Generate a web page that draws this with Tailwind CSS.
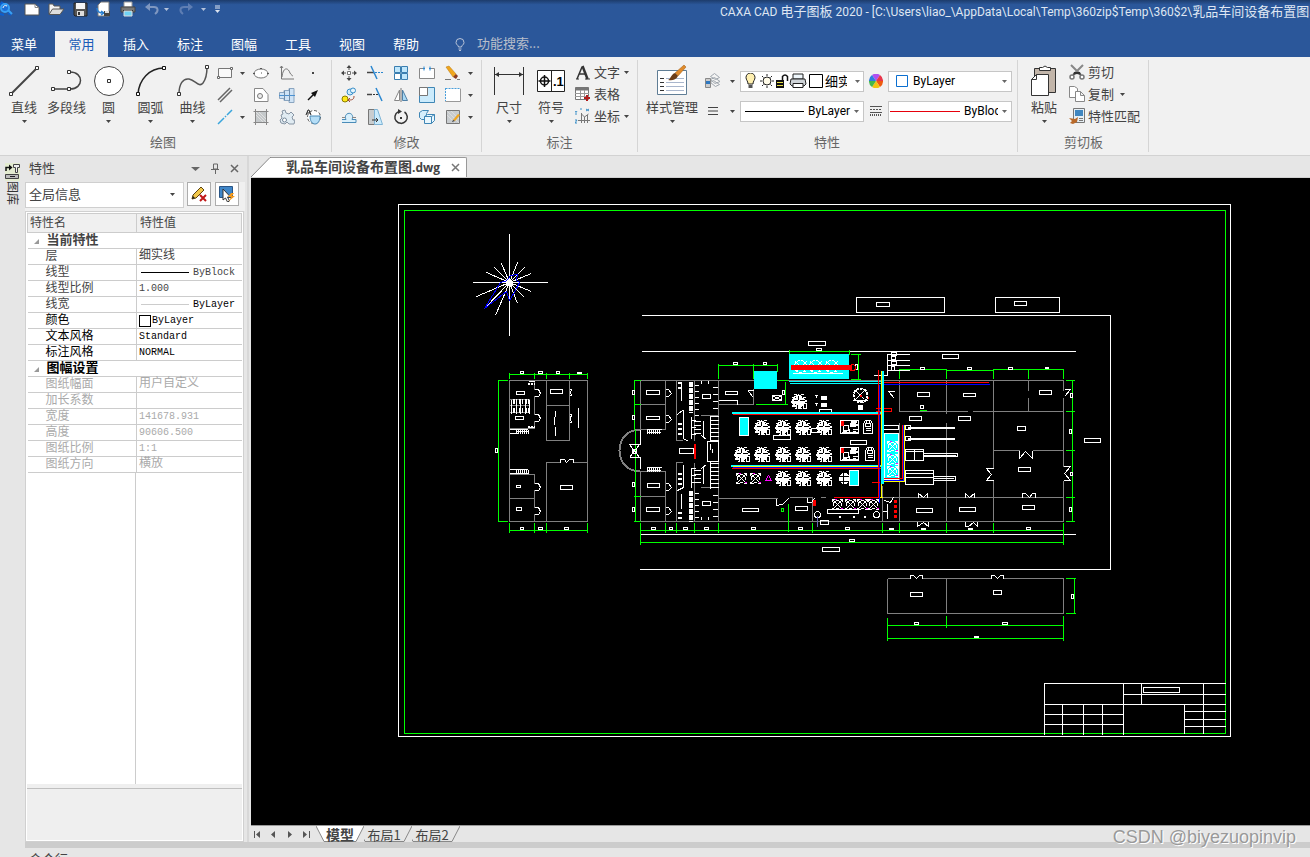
<!DOCTYPE html>
<html lang="zh-CN">
<head>
    <meta charset="UTF-8">
    <meta name="viewport" content="width=device-width, initial-scale=1.0">
    <title>CAXA CAD 电子图板 2020</title>
    <script src="https://cdn.jsdelivr.net/npm/@tailwindcss/browser@4"></script>
</head>
<body class="h-screen flex flex-col overflow-hidden bg-[#e6e6e6] text-[#444444] text-[13px] leading-4 font-['Noto_Sans_CJK_SC',sans-serif]">

<!-- Shared symbols -->
<svg class="hidden">
    <symbol id="caret" viewBox="0 0 5 3"><path d="M0 0h5L2.5 3z" fill="currentColor"/></symbol>
</svg>

<!-- Title bar and tabs -->
<header class="shrink-0 bg-[#2b579a] text-white">
    <div class="h-[31px] flex items-start justify-between overflow-hidden bg-linear-to-b from-[#1d3c6c] to-[#2b579a] to-15%">
        <div class="flex items-center h-[18px] shrink-0">
            <svg class="w-[13px] h-4 mr-[11px]" viewBox="0 0 13 16">
                <path d="M0 3h4M1 1l3 2M0 13l4 1M8 12l3 2" stroke="#0b5fd0" stroke-width="2"/>
                <circle cx="5" cy="7" r="4" fill="#1d6fd8" stroke="#38a0f5" stroke-width="2"/>
                <path d="M8 9l4 4" stroke="#38a0f5" stroke-width="2"/>
                <path d="M3 7c0-2 2-3 4-2" stroke="#fff" fill="none"/>
            </svg>
            <button class="w-6" aria-label="新建"><svg class="w-4 h-4" viewBox="0 0 16 16"><path d="M1 3h10l4 3.500V14H1z" fill="#fff" stroke="#555"/><path d="M11 3v3.500h4" fill="none" stroke="#888"/></svg></button>
            <button class="w-6" aria-label="打开"><svg class="w-4 h-4" viewBox="0 0 16 16"><path d="M1 13V3h4l1 2h6v3" fill="#f3f3f3" stroke="#555"/><path d="M1 13.500L4.500 8H16l-4 5.500z" fill="#ddd" stroke="#555"/></svg></button>
            <button class="w-6" aria-label="保存"><svg class="w-4 h-4" viewBox="0 0 16 16"><path d="M2 2h13v13H3l-1-1z" fill="#555" stroke="#222"/><path d="M4 2h9v6H4z" fill="#f5f5f5"/><path d="M5 10h7v5H5z" fill="#ddd"/><path d="M6 11h2v3H6z" fill="#333"/></svg></button>
            <button class="w-6" aria-label="另存为"><svg class="w-4 h-4" viewBox="0 0 16 16"><path d="M5 1h8v14H2V4z" fill="#fff" stroke="#777"/><path d="M1 7c0 4 2 5 6 5M5 10l3 2-3 2" fill="none" stroke="#2a7fd0" stroke-width="1.500"/><path d="M8 10h6v5H8z" fill="#444"/><path d="M9 10h4v2H9z" fill="#ddd"/></svg></button>
            <button class="w-6" aria-label="打印"><svg class="w-4 h-4" viewBox="0 0 16 16"><path d="M4 1h8v5H4z" fill="#fff" stroke="#999"/><path d="M1 6h14v5H1z" fill="#777" stroke="#444"/><path d="M3 9h10v2H3z" fill="#333"/><path d="M4 10h8v5H4z" fill="#6fd3f5" stroke="#ddd"/></svg></button>
            <button class="w-5 text-[#7f97c0]" aria-label="撤销"><svg class="w-4 h-4" viewBox="0 0 16 16"><path d="M3 6h7c4 0 5 4 1 7" fill="none" stroke="currentColor" stroke-width="2"/><path d="M1 6l5-4v8z" fill="currentColor"/></svg></button>
            <svg class="w-[5px] h-[3px] text-[#b5c3dc]"><use href="#caret"/></svg>
            <button class="w-5 ml-2 text-[#5f7eb3]" aria-label="重做"><svg class="w-4 h-4 ml-px" viewBox="0 0 16 16"><path d="M13 6H6c-4 0-5 4-1 7" fill="none" stroke="currentColor" stroke-width="2"/><path d="M15 6l-5-4v8z" fill="currentColor"/></svg></button>
            <svg class="w-[5px] h-[3px] ml-1 text-[#b5c3dc]"><use href="#caret"/></svg>
            <svg class="w-[7px] h-2 ml-2" viewBox="0 0 7 8"><path d="M1 1h5M1 3h5" stroke="#dde4f0"/><path d="M1 5h5L3.500 8z" fill="#dde4f0"/></svg>
        </div>
        <h1 class="w-[590px] shrink-0 pt-1 whitespace-nowrap text-[12px] text-[#dfe6f2] font-['Roboto','Noto_Sans_CJK_SC',sans-serif]">CAXA CAD <span class="text-[13px]">电子图板</span> 2020 - [C:\Users\liao_\AppData\Local\Temp\360zip$Temp\360$2\<span class="text-[13px]">乳品车间设备布置图</span>.dwg]</h1>
    </div>
    <nav class="h-[26px] flex items-stretch">
        <button class="w-12 mr-[7px]">菜单</button>
        <button class="w-[53px] mr-px bg-[#f1f1f1] text-[#1a5cb8]">常用</button>
        <button class="w-[54px]">插入</button>
        <button class="w-[54px]">标注</button>
        <button class="w-[54px]">图幅</button>
        <button class="w-[54px]">工具</button>
        <button class="w-[54px]">视图</button>
        <button class="w-[54px]">帮助</button>
        <label for="search" class="flex items-center ml-[22px] mr-3">
            <svg class="w-[10px] h-[13px]" viewBox="0 0 10 13"><path d="M3.500 9C3.500 7 1 7 1 4.500a4 4 0 0 1 8 0C9 7 6.500 7 6.500 9zM3.500 11h3M4 12.500h2" fill="none" stroke="#b9c4d8"/></svg>
        </label>
        <input id="search" type="text" placeholder="功能搜索..." class="w-32 pb-[2px] placeholder:text-[#b9bfca] outline-none">
    </nav>
</header>

<!-- Ribbon -->
<section class="shrink-0 h-[99px] flex py-[3px] bg-[#f1f1f1] border-b border-[#d2d2d2]">
    <!-- Draw -->
    <div class="w-[332px] pl-[3px] border-r border-[#d5d5d5] flex flex-col justify-between">
        <div class="flex">
            <button class="w-[42px] flex flex-col items-center">
                <svg class="w-8 h-9" viewBox="0 0 32 36"><path d="M3 34L29 8" stroke="#444" stroke-width="2"/><path d="M1.500 32.500h3v3h-3zM27.500 6.500h3v3h-3z" fill="#fff" stroke="#333"/></svg>
                <span class="mt-[3px]">直线</span><svg class="w-[5px] h-[3px] mt-[5px]"><use href="#caret"/></svg>
            </button>
            <button class="w-[43px] flex flex-col items-center">
                <svg class="w-8 h-9" viewBox="0 0 32 36"><path d="M3 29h16M19 12c14 0 14 17 0 17" fill="none" stroke="#444" stroke-width="1.500"/><path d="M.5 27.500h3v3h-3zM16.500 27.500h3v3h-3zM16.500 10.500h3v3h-3z" fill="#fff" stroke="#333"/></svg>
                <span class="mt-[3px] whitespace-nowrap">多段线</span>
            </button>
            <button class="w-[41px] flex flex-col items-center">
                <svg class="w-8 h-9" viewBox="0 0 32 36"><circle cx="16" cy="21" r="14.500" fill="#fff" stroke="#444"/><path d="M14.500 19.500h3v3h-3z" fill="#fff" stroke="#333"/></svg>
                <span class="mt-[3px]">圆</span><svg class="w-[5px] h-[3px] mt-[5px]"><use href="#caret"/></svg>
            </button>
            <button class="w-[43px] flex flex-col items-center">
                <svg class="w-8 h-9" viewBox="0 0 32 36"><path d="M3 34C4 20 14 8 29 8" fill="none" stroke="#222" stroke-width="1.500"/><path d="M1.500 32.500h3v3h-3zM27.500 6.500h3v3h-3z" fill="#fff" stroke="#111"/></svg>
                <span class="mt-[3px]">圆弧</span><svg class="w-[5px] h-[3px] mt-[5px]"><use href="#caret"/></svg>
            </button>
            <button class="w-[41px] flex flex-col items-center">
                <svg class="w-8 h-9" viewBox="0 0 32 36"><path d="M2 34C2 24 6 18 12 19s10 9 14 4c3-4 4-9 4-16" fill="none" stroke="#555" stroke-width="1.500"/><path d="M.5 32.500h3v3h-3zM28.500 5.500h3v3h-3z" fill="#fff" stroke="#333"/></svg>
                <span class="mt-[3px]">曲线</span><svg class="w-[5px] h-[3px] mt-[5px]"><use href="#caret"/></svg>
            </button>
            <div class="grid grid-cols-[18px_16px_26px_26px_26px] auto-rows-[22px] items-center justify-items-center mt-[2px] ml-[3px]">
                <button aria-label="矩形"><svg class="w-4 h-4" viewBox="0 0 16 16"><path d="M1.500 3.500h13v9h-13z" fill="#fafafa" stroke="#777"/><path d="M.5 11.500h2v2h-2zM13.500 2.500h2v2h-2z" fill="#fff" stroke="#666"/></svg></button>
                <svg class="w-[5px] h-[3px]"><use href="#caret"/></svg>
                <button class="mr-1" aria-label="椭圆"><svg class="w-4 h-4" viewBox="0 0 16 16"><ellipse cx="8" cy="8.500" rx="7" ry="4.500" fill="#fff" stroke="#777"/><path d="M8 8h1M7 3.500h2M0 8.500h2M14 8.500h2" stroke="#555"/></svg></button>
                <button class="mr-1" aria-label="函数曲线"><svg class="w-4 h-4" viewBox="0 0 16 16"><path d="M2.500 1v13H15M3 12C4 2 9 2 11 8c1 2 3 3 3 3M1 3l1.500-2L4 3" fill="none" stroke="#777"/></svg></button>
                <button class="mr-1" aria-label="点"><svg class="w-4 h-4" viewBox="0 0 16 16"><path d="M7 7h2v2H7z" fill="#444"/></svg></button>

                <button aria-label="平行线"><svg class="w-4 h-4" viewBox="0 0 16 16"><path d="M1 13L13 1M3 15L15 3" stroke="#666" stroke-width="1.500"/></svg></button>
                <span></span>
                <button class="mr-1" aria-label="局部放大"><svg class="w-4 h-4" viewBox="0 0 16 16"><path d="M1.500 1.500H10l5 6v7H1.500z" fill="#fff" stroke="#888"/><circle cx="7" cy="9" r="2.500" fill="#eee" stroke="#777"/></svg></button>
                <button class="mr-1" aria-label="孔轴"><svg class="w-4 h-4" viewBox="0 0 16 16"><path d="M.5 5.500H5v-2h5v-2h5v14h-5v-2H5v-2H.500z" fill="#cfe3f5" stroke="#8aa5c0"/><path d="M0 8.500h16" stroke="#4a90d0"/><path d="M5.500 4v9M10.500 2v12" stroke="#6d8cab"/></svg></button>
                <button class="mr-1" aria-label="箭头"><svg class="w-4 h-4" viewBox="0 0 16 16"><path d="M3 13l6-6" stroke="#111" stroke-width="1.500"/><path d="M13 3L6 6l4 4z" fill="#111"/></svg></button>

                <button aria-label="中心线"><svg class="w-4 h-4" viewBox="0 0 16 16"><path d="M1 15L7 9M8 8l1-1M10 6l5-5" stroke="#3aa5dc" stroke-width="1.500"/></svg></button>
                <svg class="w-[5px] h-[3px]"><use href="#caret"/></svg>
                <button class="mr-1" aria-label="剖面线"><svg class="w-4 h-4" viewBox="0 0 16 16"><path d="M2.500 2.500h11v11h-11z" fill="#c4c8ca" stroke="#777"/><path d="M.5 2.500h15M.5 13.500h15M2.500 0v16M13.500 0v16" stroke="#888"/><path d="M3 6l7 7M3 3l10 10M6 3l7 7" stroke="#e0e0e0"/></svg></button>
                <button class="mr-1" aria-label="齿轮"><svg class="w-4 h-4" viewBox="0 0 16 16"><path d="M3 2l3-1 1 3 3 1 2-2 3 3-2 2 1 3h2l-1 4h-5l-2-2-2 2-4-1-1-3 2-2-1-3 2-1z" fill="#e0ebf2" stroke="#8896a5"/><circle cx="5.500" cy="11" r="2" fill="#fff" stroke="#75889a"/></svg></button>
                <button class="mr-1" aria-label="局部填充"><svg class="w-4 h-4" viewBox="0 0 16 16"><circle cx="9" cy="8" r="6.500" fill="#fff" stroke="#555" stroke-dasharray="3 2"/><path d="M5 7h10c0 5-2 8-5 8S5 12 5 7z" fill="#b5def7" stroke="#4a89b5"/><path d="M1 6l2-5h1l2 5M2 4h3" fill="none" stroke="#222"/></svg></button>
            </div>
        </div>
        <p class="text-center text-[#666666] leading-5 pr-2">绘图</p>
    </div>

    <!-- Modify -->
    <div class="w-[150px] pl-1 border-r border-[#d5d5d5] flex flex-col justify-between">
        <div class="grid grid-cols-[26px_26px_26px_26px_26px_9px] auto-rows-[22px] items-center justify-items-center mt-[2px]">
            <button aria-label="平移"><svg class="w-4 h-4" viewBox="0 0 16 16"><path d="M6.500 6.500h3v3h-3z" fill="#fff" stroke="#777"/><path d="M8 0l2.500 3h-5zM8 16l2.500-3h-5zM0 8l3-2.500v5zM16 8l-3-2.500v5z" fill="#444"/><path d="M8 3v2M8 11v2M3 8h2M11 8h2" stroke="#555"/></svg></button>
            <button aria-label="裁剪"><svg class="w-4 h-4" viewBox="0 0 16 16"><path d="M0 7.500h7" stroke="#444" stroke-width="1.500"/><path d="M8 7.500h8" stroke="#2b87d0" stroke-dasharray="2 1"/><path d="M4 1l6 13" stroke="#2b87d0" stroke-width="1.500"/></svg></button>
            <button aria-label="阵列"><svg class="w-4 h-4" viewBox="0 0 16 16"><path d="M1.500 1.500h6v6h-6zM8.500 1.500h6v6h-6zM8.500 8.500h6v6h-6z" fill="#bfe6fb" stroke="#3a7eb0"/><path d="M1.500 8.500h6v6h-6z" fill="#fff" stroke="#3a7eb0"/></svg></button>
            <button aria-label="打断"><svg class="w-4 h-4" viewBox="0 0 16 16"><path d="M4 3.500H.500v10h15v-10H12" fill="#fff" stroke="#888"/><path d="M5 1.500v4M11 1.500v4M4 3.500h2M10 3.500h2" stroke="#2b87d0"/></svg></button>
            <button aria-label="删除"><svg class="w-4 h-4" viewBox="0 0 16 16"><path d="M1 2l3-1 7 8-3 3z" fill="#f0a61e" stroke="#b9760b" stroke-width=".5"/><path d="M8 12l3-3 2 2-2 3z" fill="#8c3c20"/><path d="M0 14.500h6M12 14.500h3" stroke="#777"/></svg></button>
            <svg class="w-[5px] h-[3px]"><use href="#caret"/></svg>

            <button aria-label="平移复制"><svg class="w-4 h-4" viewBox="0 0 16 16"><circle cx="4" cy="12" r="3" fill="#ffe81a" stroke="#8a7d00"/><circle cx="9" cy="5" r="3" fill="#cdeafc" stroke="#3a8fc8"/><circle cx="12" cy="3.500" r="2.500" fill="#e6f5fd" stroke="#3a8fc8"/><path d="M8 13c4 0 5-1 5-4M9 11l-2 2 2 2" fill="none" stroke="#a04a35"/></svg></button>
            <button aria-label="延伸"><svg class="w-4 h-4" viewBox="0 0 16 16"><path d="M0 7.500h5" stroke="#444" stroke-width="1.500"/><path d="M6 7.500h5" stroke="#333" stroke-dasharray="2 1"/><path d="M9 1l6 13" stroke="#2b87d0" stroke-width="1.500"/></svg></button>
            <button aria-label="镜像"><svg class="w-4 h-4" viewBox="0 0 16 16"><path d="M6.500 3v10.500h-5z" fill="#fff" stroke="#888"/><path d="M9.500 3v10.500h5z" fill="#a8d8f4" stroke="#4f7fa5"/><path d="M8 1v14" stroke="#777"/></svg></button>
            <button aria-label="缩放"><svg class="w-4 h-4" viewBox="0 0 16 16"><path d="M.5.500h15v15H.500z" fill="#cbebfc" stroke="#3f86b5"/><path d="M.5.500h8v8h-8z" fill="#fff" stroke="#777"/></svg></button>
            <button aria-label="分解"><svg class="w-4 h-4" viewBox="0 0 16 16"><path d="M.5 1.500h15v13H.500z" fill="#fff" stroke="#999"/><path d="M.5 1.500h15M.5 1v13" stroke="#f1f1f1"/><path d="M.5 1.500h15M.5 1v13" stroke="#4aa0dc" stroke-dasharray="2 1"/></svg></button>
            <svg class="w-[5px] h-[3px]"><use href="#caret"/></svg>

            <button aria-label="等距线"><svg class="w-4 h-4" viewBox="0 0 16 16"><path d="M1 13.500h14v-3h-4c2-4-1-7-4-6s-3 4-2 6H1" fill="#d8effb" stroke="#4a8cb8"/><path d="M1 8.500h3M11 8.500h4" stroke="#888"/></svg></button>
            <button aria-label="拉伸"><svg class="w-4 h-4" viewBox="0 0 16 16"><path d="M1.500.500h6v15h-6z" fill="#c9cdcf" stroke="#777"/><path d="M7.500.500h3l5 15h-8z" fill="#cbebfc" stroke="#7fb4d6"/><path d="M5 11h6M9 9l2 2-2 2" fill="none" stroke="#333"/></svg></button>
            <button aria-label="旋转"><svg class="w-4 h-4" viewBox="0 0 16 16"><path d="M11.500 3A6.200 6.200 0 1 1 5 2.800" fill="none" stroke="#333" stroke-width="1.500"/><path d="M5 0l4 2.500L5 5z" fill="#333"/><path d="M7 8h2v2H7z" fill="#333"/></svg></button>
            <button aria-label="块"><svg class="w-4 h-4" viewBox="0 0 16 16"><path d="M.5 3.500l3-2h6l-2 3v6h-5l-2-2z" fill="#d5eefb" stroke="#3f86b5"/><path d="M5.500 7.500l3-2h7v6l-3 3h-7zM5.500 7.500h7v7M12.500 7.500l3-2" fill="#e9f7fe" stroke="#3f86b5"/></svg></button>
            <button aria-label="编辑填充"><svg class="w-4 h-4" viewBox="0 0 16 16"><path d="M1.500 1.500h13v13h-13z" fill="#c8cccf" stroke="#777"/><path d="M2 6l8 8M2 2l12 12M6 2l8 8" stroke="#ddd"/><path d="M8 11l5-6 2 1-5 6z" fill="#f0a61e"/><path d="M8 11l2 1-3 1z" fill="#333"/></svg></button>
            <svg class="w-[5px] h-[3px]"><use href="#caret"/></svg>
        </div>
        <p class="text-center text-[#666666] leading-5 pr-1">修改</p>
    </div>

    <!-- Annotation -->
    <div class="w-[156px] pl-[6px] border-r border-[#d5d5d5] flex flex-col justify-between">
        <div class="flex">
            <button class="w-[42px] flex flex-col items-center">
                <svg class="w-8 h-9" viewBox="0 0 32 36"><path d="M1.500 7v28M30.500 7v28M2 14.500h28" stroke="#333"/><path d="M2 14.500l4-2.500v5zM30 14.500L26 12v5z" fill="#333"/></svg>
                <span class="mt-[3px]">尺寸</span><svg class="w-[5px] h-[3px] mt-[5px]"><use href="#caret"/></svg>
            </button>
            <button class="w-[42px] flex flex-col items-center">
                <svg class="w-8 h-9" viewBox="0 0 32 36"><path d="M2.500 10.500h27v21h-27zM16.500 10v22" fill="#fff" stroke="#222"/><circle cx="9.500" cy="21" r="4" fill="none" stroke="#111" stroke-width="1.500"/><path d="M3.500 21h12M9.500 15v12" stroke="#111" stroke-width="1.500"/><text x="18" y="26" font-size="13" font-weight="bold" fill="#000" font-family="Liberation Sans">.1</text></svg>
                <span class="mt-[3px]">符号</span><svg class="w-[5px] h-[3px] mt-[5px]"><use href="#caret"/></svg>
            </button>
            <div class="grid auto-rows-[22px] mt-[1px] ml-[3px]">
                <button class="flex items-center gap-1"><svg class="w-[15px] h-4" viewBox="0 0 15 16"><path d="M2 15L7 3M4 10h7" fill="none" stroke="#333" stroke-width="1.500"/><path d="M7.500 2L12.500 15" stroke="#333" stroke-width="2.500"/><path d="M1 15h3M10 15h5" stroke="#333"/></svg>文字<svg class="w-[5px] h-[3px]"><use href="#caret"/></svg></button>
                <button class="flex items-center gap-1"><svg class="w-[15px] h-4" viewBox="0 0 15 16"><path d="M.5 1.500h13v12H.500z" fill="#fff" stroke="#777"/><path d="M.5 1.500h13v3H.500z" fill="#777"/><path d="M0 7.500h14M0 10.500h14M5.500 4v9M9.500 4v9" stroke="#999"/><path d="M12 9v6M9 12h6" stroke="#b01c1c" stroke-width="2"/></svg>表格</button>
                <button class="flex items-center gap-1"><svg class="w-[15px] h-4" viewBox="0 0 15 16"><path d="M6.500 5v10M3 12.500h12M6.500 6l3 3 4-3M9.500 9v6M12.500 7v8" fill="none" stroke="#777"/><path d="M0 3l1 1.500L2 3M1 5v2M0 12h2l-2 3h2M5 1h2M11 1l3 2M14 1l-3 2" fill="none" stroke="#3a8fc8"/></svg>坐标<svg class="w-[5px] h-[3px]"><use href="#caret"/></svg></button>
            </div>
        </div>
        <p class="text-center text-[#666666] leading-5 pr-[6px]">标注</p>
    </div>

    <!-- Properties -->
    <div class="w-[380px] pl-[5px] border-r border-[#d5d5d5] flex flex-col justify-between">
        <div class="flex">
            <button class="w-[58px] flex flex-col items-center">
                <svg class="w-8 h-9" viewBox="0 0 32 36"><path d="M1.500 10.500h29v24h-29z" fill="#fff" stroke="#5f7d95"/><path d="M4 18.500h4M4 22.500h4M4 26.500h4M4 30.500h4" stroke="#333"/><path d="M10 18.500h18M10 22.500h18M10 26.500h18M10 30.500h18" stroke="#a9b6cc"/><path d="M19 13L28 5l2 2-8 9z" fill="#e08a2a" stroke="#9a5a12" stroke-width=".5"/><path d="M12 20c3-1 3-6 7-7l3 3c-2 4-6 5-10 4z" fill="#6b3d17"/></svg>
                <span class="mt-[3px] whitespace-nowrap">样式管理</span><svg class="w-[5px] h-[3px] mt-[5px]"><use href="#caret"/></svg>
            </button>
            <div class="grid grid-cols-[24px_15px_124px_24px_124px] auto-rows-[30px] items-center mt-[6px]">
                <button class="justify-self-center" aria-label="图层"><svg class="w-4 h-4" viewBox="0 0 16 16"><path d="M5.500 3.500l4-3 5 4-4 2zM5.500 6.500l4-2 5.500 4-5 2zM5.500 9.500l3-2 6 4-4 2z" fill="#f4f4f4" stroke="#a0a7ae"/><path d="M.5 5.500h5v9h-5z" fill="#ccc" stroke="#888"/><path d="M1 8h4v3H1z" fill="#2f78c0"/></svg></button>
                <svg class="w-[5px] h-[3px] justify-self-center"><use href="#caret"/></svg>
                <div class="h-[21px] flex items-center gap-px px-[3px] bg-white border border-[#c6c6c6] text-black">
                    <svg class="w-[80px] h-4 shrink-0" viewBox="0 0 80 16">
                        <path d="M4 11C4 8 2 7 2 4.500a4.500 4.500 0 0 1 9 0C11 7 9 8 9 11z" fill="#fff0b0" stroke="#222"/><path d="M4.500 12h4v3h-4z" fill="#555"/>
                        <circle cx="23" cy="8" r="4" fill="#fffbe8" stroke="#222"/><path d="M23 1v2M23 13v2M16 8h2M28 8h2M18 3l1.500 1.500M26.500 11.500L28 13M28 3l-1.500 1.500M18 13l1.500-1.500" stroke="#222"/>
                        <path d="M32 7h8v8h-8z" fill="#111"/><path d="M33 9.500h6M33 12.500h6" stroke="#e8e04a"/><path d="M38.500 7V3.500q2.500-3 5 0V8" fill="none" stroke="#111" stroke-width="1.500"/>
                        <path d="M49 1h10v5H49z" fill="#eef6fb" stroke="#222"/><path d="M47 6h14l1 5-2 2H48l-2-2z" fill="#cfd4d8" stroke="#222"/><path d="M49 10.500h10v4H49z" fill="#fff" stroke="#222"/>
                        <path d="M65.500 1.500h13v13h-13z" fill="#fff" stroke="#000"/>
                    </svg>
                    <label class="sr-only" for="layer">图层</label>
                    <select id="layer" class="appearance-none w-[22px] overflow-hidden text-clip whitespace-nowrap"><option>细实线</option></select>
                    <svg class="w-[5px] h-[3px] ml-auto shrink-0 text-[#666666]"><use href="#caret"/></svg>
                </div>
                <svg class="w-[14px] h-[14px] justify-self-center" viewBox="0 0 14 14"><path d="M7 7L3 1a7 7 0 0 1 8 0z" fill="#b04ff0"/><path d="M7 7l4-6a7 7 0 0 1 3 6z" fill="#e8354a"/><path d="M7 7h7a7 7 0 0 1-3 6z" fill="#ee5a10"/><path d="M7 7l4 6a7 7 0 0 1-8 0z" fill="#f2c40f"/><path d="M7 7l-4 6a7 7 0 0 1-3-6z" fill="#45b84a"/><path d="M7 7H0a7 7 0 0 1 3-6z" fill="#2f7de0"/></svg>
                <div class="h-[21px] flex items-center px-[6px] bg-white border border-[#c6c6c6] text-black">
                    <svg class="w-[14px] h-[14px] shrink-0 mr-1" viewBox="0 0 14 14"><path d="M1.500 1.500h11v11h-11z" fill="#fff" stroke="#0b6fd0"/></svg>
                    <label class="sr-only" for="color">颜色</label>
                    <select id="color" class="appearance-none flex-1 text-[12px] font-['Roboto',sans-serif]"><option>ByLayer</option></select>
                    <svg class="w-[5px] h-[3px] ml-auto mr-[-2px] text-[#666666]"><use href="#caret"/></svg>
                </div>

                <button class="justify-self-center" aria-label="线宽"><svg class="w-[10px] h-[10px]" viewBox="0 0 10 10"><path d="M0 1.500h10M0 5h10M0 8.500h10" stroke="#444"/></svg></button>
                <svg class="w-[5px] h-[3px] justify-self-center"><use href="#caret"/></svg>
                <div class="h-[21px] flex items-center px-1 bg-white border border-[#c6c6c6] text-black">
                    <span class="w-[59px] border-t border-black mr-1"></span>
                    <label class="sr-only" for="linetype">线型</label>
                    <select id="linetype" class="appearance-none w-[46px] text-[12px] font-['Roboto',sans-serif]"><option>ByLayer</option></select>
                    <svg class="w-[5px] h-[3px] ml-auto text-[#666666]"><use href="#caret"/></svg>
                </div>
                <svg class="w-3 h-3 justify-self-center" viewBox="0 0 12 12"><path d="M0 1.500h12M0 7.500h12" stroke="#555"/><path d="M0 4.500h12" stroke="#555" stroke-dasharray="2 1"/><path d="M0 10h12" stroke="#555" stroke-width="2" stroke-dasharray="1 1"/></svg>
                <div class="h-[21px] flex items-center pl-px pr-1 bg-white border border-[#c6c6c6] text-black">
                    <span class="w-[70px] border-t border-red-600 mr-1 shrink-0"></span>
                    <label class="sr-only" for="lineweight">线宽</label>
                    <select id="lineweight" class="appearance-none w-[34px] overflow-hidden text-clip whitespace-nowrap text-[12px] font-['Roboto',sans-serif]"><option>ByBlock</option></select>
                    <svg class="w-[5px] h-[3px] ml-auto shrink-0 text-[#666666]"><use href="#caret"/></svg>
                </div>
            </div>
        </div>
        <p class="text-center text-[#666666] leading-5 pr-[6px]">特性</p>
    </div>

    <!-- Clipboard -->
    <div class="w-[131px] pl-[5px] border-r border-[#d5d5d5] flex flex-col justify-between">
        <div class="flex">
            <button class="w-[42px] flex flex-col items-center">
                <svg class="w-8 h-9" viewBox="0 0 32 36"><path d="M6.500 8.500h21v24h-21z" fill="#c2b5a9" stroke="#333"/><path d="M11.500 10.500v-3h3q2.500-3 5 0h3v3z" fill="#fff" stroke="#333"/><path d="M3.500 19.500l5-5h12v21h-17zM8.500 14.500v5h-5" fill="#fff" stroke="#333"/></svg>
                <span class="mt-[3px]">粘贴</span><svg class="w-[5px] h-[3px] mt-[5px]"><use href="#caret"/></svg>
            </button>
            <div class="grid auto-rows-[22px] mt-[1px] ml-1">
                <button class="flex items-center gap-[3px]"><svg class="w-4 h-4" viewBox="0 0 16 16"><path d="M2 1l10 10M14 1L4 11" stroke="#888" stroke-width="2"/><path d="M5 8h6l1 3-4-1-4 1z" fill="#333"/><circle cx="3" cy="13" r="2" fill="#fff" stroke="#777" stroke-width="1.500"/><circle cx="13" cy="13" r="2" fill="#fff" stroke="#777" stroke-width="1.500"/></svg>剪切</button>
                <button class="flex items-center gap-[3px]"><svg class="w-4 h-4" viewBox="0 0 16 16"><path d="M.5.500h5l3 2v9h-8z" fill="#fff" stroke="#888"/><path d="M6.500 5.500h5l4 4v6h-9zM11.500 5.500v4h4" fill="#fff" stroke="#888"/></svg>复制<svg class="w-[5px] h-[3px] ml-[3px]"><use href="#caret"/></svg></button>
                <button class="flex items-center gap-[3px] whitespace-nowrap"><svg class="w-4 h-4" viewBox="0 0 16 16"><path d="M4.500.500h11v14h-11z" fill="#e6eff5" stroke="#777"/><path d="M6 2h8v6H6z" fill="#3f86c0"/><path d="M10 10.500h4M10 12.500h4" stroke="#777"/><path d="M0 10l6 1 3-2-1 5-4 2-3-1 2-2z" fill="#b8692a"/></svg>特性匹配</button>
            </div>
        </div>
        <p class="text-center text-[#666666] leading-5 pr-1">剪切板</p>
    </div>
</section>

<!-- Work area -->
<main class="flex-1 min-h-0 flex">
    <!-- Docked library tab -->
    <button class="w-[25px] shrink-0 flex flex-col items-center pt-[7px]">
        <svg class="w-[15px] h-[18px]" viewBox="0 0 15 18"><path d="M0 0h15v18H0z" fill="#e4ecd0"/><path d="M1 8V4.500H5" fill="none" stroke="#111" stroke-width="1.500"/><path d="M4 1.500L7.500 4.500 4 7.500z" fill="#111"/><path d="M8.500 1.500h6v3h-2v5h-2v-5h-2z" fill="#eee" stroke="#444"/><path d="M.5 11.500h13v4H.500z" fill="#bbb" stroke="#444"/><path d="M5 13.500h5" stroke="#222"/></svg>
        <span class="text-[12px] leading-[14px] text-[#333333] [writing-mode:vertical-rl] [text-orientation:sideways]">图库</span>
    </button>

    <!-- Properties panel -->
    <aside class="w-[220px] shrink-0 flex flex-col">
        <div class="h-[26px] flex items-center pl-1 pr-[6px] pb-[3px]">
            <h2 class="flex-1">特性</h2>
            <svg class="w-[50px] h-3" viewBox="0 0 50 12"><path d="M2 5h9l-4.500 4z" fill="#666"/><path d="M24.500 2h4v5h-4zM22 7.500h8M26.500 8v4" fill="none" stroke="#666"/><path d="M42 3l7 7M49 3l-7 7" stroke="#666" stroke-width="1.500"/></svg>
        </div>
        <div class="flex items-start gap-[3px] h-[29px] bg-[#f0f0f0]">
            <div class="w-[159px] h-[26px] flex items-center pl-[3px] pr-1 pb-[2px] bg-white border border-[#cfcfcf]">
                <label class="sr-only" for="scope">特性范围</label>
                <select id="scope" class="appearance-none flex-1"><option>全局信息</option></select>
                <svg class="w-[5px] h-[3px] mr-1"><use href="#caret"/></svg>
            </div>
            <button class="w-6 h-6 flex items-center justify-center bg-white border border-[#adadad]" aria-label="清除选择"><svg class="w-4 h-4" viewBox="0 0 16 16"><path d="M1 13l1-4L10 1l3 3-8 8z" fill="#f2c84a" stroke="#5a4310"/><path d="M1 13l1-3 2 2z" fill="#222"/><path d="M9 9l6 6M15 9l-6 6" stroke="#c01818" stroke-width="2"/></svg></button>
            <button class="w-6 h-6 ml-px flex items-center justify-center bg-white border border-[#adadad]" aria-label="快速选择"><svg class="w-4 h-4" viewBox="0 0 16 16"><path d="M.5.500h13v11H.500z" fill="#3f86c8" stroke="#2a5585"/><path d="M4 3v11l2.500-2 2 4 2-1-2-4h3z" fill="#fff" stroke="#333"/><path d="M12 7l-3 4h3l-2 4 6-5h-3l2-3z" fill="#f59a1b"/></svg></button>
        </div>
        <div class="flex-1 min-h-0 flex flex-col mr-px bg-[#efefef] border border-[#d0d0d0] outline outline-white -outline-offset-2">
            <div class="flex-1 min-h-0 flex flex-col bg-white px-px pt-px">
                <table class="w-full table-fixed border-collapse text-[12px] leading-[15px] whitespace-nowrap font-['Liberation_Mono','Noto_Sans_CJK_SC',monospace]">
                    <thead>
                        <tr class="h-[19px] bg-[#f0f0f0] text-left">
                            <th class="w-[109px] p-0 pl-[2px] pt-[2px] font-normal border border-[#cccccc]">特性名</th>
                            <th class="p-0 pl-[3px] pt-[2px] font-normal border border-[#cccccc]">特性值</th>
                        </tr>
                    </thead>
                    <tbody class="[&_tr]:h-4 [&_tr]:border-b [&_tr]:border-[#cccccc] [&_td]:p-0 [&_td]:pl-[2px] [&_th]:p-0 [&_th]:pl-[18px] [&_th]:text-left [&_th]:font-normal [&_td]:border-l [&_td]:border-[#cccccc] [&_td]:leading-[15px] [&_th]:pt-px [&_th]:leading-[14px]">
                        <tr><th colspan="2"><span class="flex items-center gap-[8px] -ml-3 text-[13px] font-bold"><svg class="w-[5px] h-[5px]" viewBox="0 0 5 5"><path d="M5 0v5H0z" fill="#999"/></svg>当前特性</span></th></tr>
                        <tr><th>层</th><td>细实线</td></tr>
                        <tr><th>线型</th><td><span class="flex items-center gap-1 text-[10px]"><span class="w-12 ml-[2px] border-t border-black"></span>ByBlock</span></td></tr>
                        <tr><th>线型比例</th><td><span class="block text-[10px]">1.000</span></td></tr>
                        <tr><th>线宽</th><td><span class="flex items-center gap-1 text-[10px] text-black"><span class="w-12 ml-[2px] border-t border-[#cccccc]"></span>ByLayer</span></td></tr>
                        <tr class="text-black"><th>颜色</th><td><span class="flex items-center gap-px text-[10px]"><span class="w-3 h-3 border border-black"></span>ByLayer</span></td></tr>
                        <tr class="text-black"><th>文本风格</th><td><span class="block text-[10px]">Standard</span></td></tr>
                        <tr class="text-black"><th>标注风格</th><td><span class="block text-[10px]">NORMAL</span></td></tr>
                        <tr class="text-black"><th colspan="2"><span class="flex items-center gap-[8px] -ml-3 text-[13px] font-bold"><svg class="w-[5px] h-[5px]" viewBox="0 0 5 5"><path d="M5 0v5H0z" fill="#999"/></svg>图幅设置</span></th></tr>
                        <tr class="text-[#aaaaaa]"><th>图纸幅面</th><td>用户自定义</td></tr>
                        <tr class="text-[#aaaaaa]"><th>加长系数</th><td></td></tr>
                        <tr class="text-[#aaaaaa]"><th>宽度</th><td><span class="block text-[10px]">141678.931</span></td></tr>
                        <tr class="text-[#aaaaaa]"><th>高度</th><td><span class="block text-[10px]">90606.500</span></td></tr>
                        <tr class="text-[#aaaaaa]"><th>图纸比例</th><td><span class="block text-[10px]">1:1</span></td></tr>
                        <tr class="text-[#aaaaaa]"><th>图纸方向</th><td>横放</td></tr>
                    </tbody>
                </table>
                <div class="flex-1 w-[109px] border-r border-[#cccccc]"></div>
            </div>
            <div class="h-[57px] shrink-0 pt-1"><div class="border-t border-[#c0c0c0]"></div></div>
        </div>
    </aside>
    <div class="w-[2px] mx-[2px] shrink-0 bg-[#d8d8d8]"></div>

    <!-- Drawing view -->
    <section class="flex-1 min-w-0 flex flex-col">
        <div class="h-[22px] shrink-0 flex items-end border-b border-[#d0d0d0]">
            <div class="flex items-end">
                <svg class="w-5 h-5" viewBox="0 0 20 20"><path d="M0 20L19 .500h1V20z" fill="#fff"/><path d="M0 20L19 .500h1" fill="none" stroke="#888"/></svg>
                <div class="h-5 w-[196px] flex items-center justify-between pl-[15px] pr-[6px] bg-white border-t border-r border-[#999999] rounded-tr-[2px]">
                    <span class="text-[14px] font-bold whitespace-nowrap font-['Open_Sans','Noto_Sans_CJK_SC',sans-serif]">乳品车间设备布置图<span class="text-[12px]">.dwg</span></span>
                    <button aria-label="关闭"><svg class="w-[9px] h-[9px]" viewBox="0 0 9 9"><path d="M1 1l7 7M8 1L1 8" stroke="#777" stroke-width="1.500"/></svg></button>
                </div>
            </div>
        </div>

        <div class="flex-1 min-h-0 bg-black">
            <svg class="w-full h-full" viewBox="250.5 177.5 1059 647" fill="none" stroke="#fff" stroke-width="1" shape-rendering="crispEdges">
                <defs>
                    <!-- process tank -->
                    <g id="tank">
                        <circle r="6" fill="#fff"/>
                        <path d="M-8 0h16M-7 4h14M-5 -7h3M2 -7h3M-7 -4h2M5 -4h2M-4 7h7M0 -8v3"/>
                        <path d="M-8 1h3M-7 5h3M5 -1h3"/>
                        <path d="M-5 -1h4M1 -1h5M0 -6v4M-1 3v4" stroke="#000"/>
                        <path d="M-4 -4h1M3 -4h1M-4 3h1" stroke="#000"/>
                        <path d="M5 2h3v5h-3z" fill="#000"/>
                    </g>
                    <!-- round stirrer -->
                    <g id="mixer">
                        <path d="M-5 -5l10 10M5 -5l-10 10M-5 -5h3M2 -5h3M-5 5h3M2 5h3M-5 -5v2M5 -5v2M-5 3v2M5 3v2"/>
                        <circle r="4"/>
                        <path d="M-3 -5h2M3 4h2" stroke="#f0f"/>
                    </g>
                    <g id="filler">
                        <path d="M0 0h18v13h-18zM3 5h5v5h-5zM10 3h5v3h-5zM9 8v5M12 9h5M2 11h4M12 11h3"/>
                        <path d="M10 1h6M10 4h7M1 12h16" stroke-width="2"/>
                        <path d="M1.500 0v5" stroke="#f00" stroke-width="3"/>
                    </g>
                    <g id="can"><path d="M0 3l2-3h5l2 3v10h-9zM2 3h5v3h-5zM2 8h5M2 10h5M3 0v3M6 0v3"/></g>
                </defs>

                <!-- sheet frame -->
                <path d="M398 204h832v532h-832z"/>
                <path d="M404 210h821v523h-821z" stroke="#0f0"/>

                <!-- wind rose -->
                <path d="M509 233v102M472 282h75M486 272l23 10M494 267l15 15M501 263l8 19M517 262l-8 20M524 267l-15 15M531 273l-22 9M531 291l-22-9M524 297l-15-15M517 303l-8-21M495 315l14-33M485 307l24-25M476 296l33-14"/>
                <path d="M484 308l16-26 7-2 3-5 7-1-1 6 3 2-3 6-7 12-3-9z" stroke="#00f"/>
                <circle cx="509" cy="282" r="3" fill="#fff"/>

                <!-- site outline -->
                <path d="M641 315h469v254h-471M641 351h434M639 534h436M856 297h88v15h-88zM876 302h13v4h-13zM995 297h64v15h-64zM1014 301h12v4h-12zM1084 438h16v4h-16zM942 354h16v4h-16zM808 341h17v4h-17zM822 547h17v4h-17z"/>

                <!-- walls -->
                <g stroke="#808080">
                    <path d="M509 380h78v141h-78zM534 380v9M534 395v19M534 420v8h-25M509 405h20M509 399h20M509 412h20M546 380v60h23v-60M546 405h23M546 521v-59h14M573 462h14M509 474h25v9M534 489v18M534 513v8M509 498h25"/>
                    <path d="M640 380h423M640 521h423M640 380v49h25v-49M640 404h25M640 521v-50h25v50M640 496h25M676 380v60h6M676 521v-59h6M694 380v60M694 462v59M718 380v141M700 415h18M700 487h18"/>
                    <path d="M640 429c-28 0-28 42 0 42" stroke-width="2"/>
                    <path d="M718 404h35v-16M718 498h59M789 497h23M825 497h-5M882 497h181M812 497v24M882 485v36M899 380v31h68M972 411h91M946 380v33M946 422v99M993 380v88M993 480v41M1028 380v10M1028 397v14M1063 380v10M1063 397v69M1063 480v41M993 450h26M1032 450h31M899 422v99M887 578h23M922 578h69M1003 578h60v35h-176v-35M946 578v35"/>
                </g>

                <!-- dimension lines -->
                <g stroke="#0f0">
                    <path d="M509 374h78M509 372v6M534 372v6M546 372v6M569 372v6M587 372v6M498 380v141M497 380h10M497 521h10M509 530h78M509 522v10M534 522v10M546 522v10M587 522v10"/>
                    <path d="M634 380v49M635 429v92M633 380h7M633 404h7M633 496h7M633 521h7M718 365h59M718 363v15M753 363v15M777 363v8M777 380h10M785 381v23M755 404h32"/>
                    <path d="M789 351h60M789 349v5M849 349v5M858 354v25M850 354h10M850 379h10"/>
                    <path d="M640 530h423M640 522v22M665 522v10M676 522v10M694 522v10M718 522v10M788 503v28M812 522v10M882 522v10M899 522v10M946 522v10M993 522v10M1063 522v22M640 542h423"/>
                    <path d="M899 378v-9h47M946 370h47M993 369h70v9M946 368v10M993 368v10M1028 368v10M1072 380v141M1065 380h9M1065 411h9M1065 450h9M1065 497h9M1065 521h9M919 410h7"/>
                    <path d="M1065 578h10M1065 613h10M1074 578v35M886 625h177M886 638h177M887 617v23M946 615v12M1063 615v25M781 508h2v3h-2z"/>
                </g>

                <!-- dimension tags -->
                <path d="M520 371h3v2h-3zM538 371h4v2h-4zM556 371h3v2h-3zM576 372h5M576 373h5M520 527h3v2h-3zM538 527h4v2h-4zM564 527h4v2h-4zM495 448h2v4h-2zM632 390h2v4h-2zM632 415h2v4h-2zM632 482h2v4h-2zM632 507h2v4h-2zM651 527h4v2h-4zM669 527h3v2h-3zM683 527h4v2h-4zM704 527h4v2h-4zM733 362h4v2h-4zM763 362h3v2h-3zM816 348h5v2h-5zM855 364h2v5h-2zM751 527h4v2h-4zM798 527h4v2h-4zM845 527h4v2h-4zM888 528h5M888 529h5M920 528h5M920 529h5M967 528h5M967 529h5M1026 527h4v2h-4zM849 539h5v2h-5zM920 367h4v2h-4zM967 367h4v2h-4zM1008 367h4v2h-4zM1044 367h4M1044 368h4M1070 393h2v4h-2zM1069 429h2v4h-2zM1070 472h2v3h-2zM1069 507h2v4h-2zM914 622h4v2h-4zM1002 622h5v2h-5zM973 636h5M973 637h5M1071 594h2v4h-2z"/>

                <!-- room labels -->
                <path d="M516 391h8v3h-8zM515 416h8v3h-8zM516 485h4v2h-4zM516 507h5v3h-5zM550 389h12v4h-12zM560 485h12v4h-12zM646 390h13v4h-13zM646 416h13v3h-13zM647 483h12v4h-12zM646 507h13v4h-13zM679 448h14v5h-14zM702 394h8v4h-8zM702 501h8v4h-8zM725 391h12v3h-12zM718 400h19v4M742 508h16v3h-16zM795 506h12v4h-12zM773 435h17v4h-17zM850 440h16v4h-16zM883 425h15v4h-15zM811 428h8v4h-8zM827 509h31v4h-31zM820 520h8v4h-8zM819 411v-2h12v2"/>
                <path d="M917 392h12v4h-12zM963 393h12v3h-12zM1039 390h12v4h-12zM920 405h3v3h-3zM909 416h12v4h-12zM958 416h12v4h-12zM1017 426h8v4h-8zM1018 467h12v4h-12zM916 508h16v4h-16zM959 507h16v4h-16zM1022 505h12v4h-12zM910 592h12v4h-12zM993 590h8v4h-8z"/>

                <!-- doors -->
                <path d="M534 389h4l2 4-2 3h-4M534 414h4l2 4-2 3h-4M534 483h4l2 4-2 3h-4M534 507h4l2 4-2 3h-4M560 462v-3h4l2 3 3-3h4v3M569 389h2l-1 3 1 3h-2M569 414h2l-1 4 1 4h-2M578 407v20M555 410v6l-1 1v7M555 426v9M665 389h3l3 4-3 3h-3M665 415h3l3 4-3 3h-3M665 483h3l3 4-3 3h-3M665 507h3l3 4-3 3h-3"/>
                <path d="M640 429v15h-11l10 13M629 457h11v11M629 457l10-13M632 449h4v4h-4zM747 390h6M748 391l5 6M776 498v7l6-1 6-6M807 497v5h4l3-4M894 391h-6l6 7M1064 389h6l-6 7M918 497v-4l5 4 4-4v4M965 497v-4l4 4 5-4v4M1022 497v-4h3l4 4 3-4h3v4M917 521v5l6-4 5 4v-5M965 521v5h3l5-4 4 4v-5M1019 450v8l6-7 7 7v-8M993 468h-7l5 6-5 6h7M1063 466h7l-6 7 6 7h-7M910 578v-3h3l3 3 3-3h3v3M991 578v-3h3l3 3 3-3h3v3M893 497l-3 5-6-2M887 503v15M882 511h5"/>

                <!-- stairs and fixtures -->
                <path d="M509 429h18M509 433h8M515 431h13M509 469h18M509 473h19M646 429h15M646 467h15M646 432h14M646 470h14"/>
                <path d="M515 431h13M515 471h13M646 431h14M646 469h14" stroke-width="4" stroke-dasharray="1 1"/>
                <path d="M512 401h18M512 410h18" stroke-width="5" stroke-dasharray="2 1 1 2"/>
                <path d="M511 399v14M516 399v14M520 399v14M525 399v14M529 399v14M528 381h6M528 427h6" />
                <path d="M527 383h7M527 426h7" stroke-width="2" stroke-dasharray="2 1"/>
                <path d="M690 381v31M690 490v31" stroke-width="4" stroke-dasharray="5 1"/>
                <path d="M696 384v31M696 492v28" stroke-width="4" stroke-dasharray="1 5"/>
                <path d="M715 386v28M715 494v26M693 419v18M693 467v19" stroke-width="5" stroke-dasharray="1 6"/>
                <path d="M679 381v8M679 422v14M679 472v12M679 511v10" stroke-width="4" stroke-dasharray="2 3"/>
                <path d="M681 382v18M681 493v15M683 409l-6 5M683 409v29l5 3M683 464v23l-6 3M701 380v3M708 380v3M701 519v-3M708 519v-3M691 416v22M691 467v20"/>
                <path d="M714 415v26M714 462v26" stroke-width="8" stroke-dasharray="1 3"/>
                <path d="M710 415v26h8v20h-8v27M710 441h-3v20h3M703 420v16M703 467v16M701 435l5 4M701 468l5-4M710 443v6M712 448v4"/>
                <path d="M697 420v14M697 469v14" stroke-width="7" stroke-dasharray="1 3"/>
                <path d="M694 443v15" stroke="#f00" stroke-width="2"/>
                <path d="M887 375h-14M887 375v-21h22M887 360h22M887 365h22M887 370h22M891 352h5v3h-5zM891 356h4v3h-4zM891 361h5v3h-5zM891 366h3v4h-3z"/>

                <!-- cyan equipment -->
                <g fill="#0ff" stroke="#0ff">
                    <path d="M754 371h22v17h-22zM789 354h59v24h-59z"/>
                    <path d="M739 417h9v18h-9zM849 470h9v15h-9zM884 433h14v46h-14z" stroke="#fff"/>
                </g>
                <g stroke-width="1">
                    <circle cx="800" cy="366" r="6" stroke-dasharray="3 1"/><circle cx="815" cy="366" r="6" stroke-dasharray="3 1"/><circle cx="831" cy="366" r="6" stroke-dasharray="3 1"/>
                    <path d="M795 361l11 11M806 361l-11 11M810 361l11 11M821 361l-11 11M826 361l11 11M837 361l-11 11M792 373h50"/>
                    <use href="#mixer" x="892" y="446"/><use href="#mixer" x="892" y="459"/><use href="#mixer" x="892" y="471"/>
                </g>
                <path d="M790 367h61" stroke="#f00" stroke-width="5"/>
                <circle cx="852" cy="367" r="3" stroke="#f00"/>

                <!-- pipes -->
                <path d="M788 381h92M789 383h91" stroke="#0ff"/>
                <path d="M731 412h149M730 465h151" stroke="#0ff" stroke-width="2"/>
                <path d="M732 466h149M882 497h-42M881 483v14M904 424v57h-23" stroke="#ff0"/>
                <path d="M732 467h146M879 384v118M882 384h107M903 424v56h-21" stroke="#00f"/>
                <path d="M732 414h148M731 468h149M878 369v128h-45M882 382h106M902 424v54h-20M875 408h16v3h-16M871 482h8" stroke="#f00"/>
                <path d="M881.500 370v113" stroke="#0ff" stroke-width="3"/>
                <path d="M881 370v95" stroke="#ff0"/>

                <!-- tanks -->
                <use href="#tank" x="798" y="401"/><use href="#tank" x="761" y="427"/><use href="#tank" x="782" y="427"/><use href="#tank" x="802" y="427"/><use href="#tank" x="823" y="427"/>
                <use href="#tank" x="741" y="454"/><use href="#tank" x="761" y="454"/><use href="#tank" x="782" y="454"/><use href="#tank" x="802" y="454"/><use href="#tank" x="823" y="454"/>
                <use href="#tank" x="782" y="478"/><use href="#tank" x="802" y="478"/><use href="#tank" x="823" y="478"/>
                <circle cx="844" cy="478" r="5" fill="#fff"/><path d="M838 476h10M838 481h10M843 472v12" stroke="#000"/>
                <path d="M849 470h9v15h-9z" fill="#0ff"/>
                <circle cx="860" cy="395" r="7" stroke-width="2" stroke-dasharray="3 1"/><path d="M855 390l9 9M864 390l-9 9M852 400h15"/><path d="M859 395h2M867 397h1" stroke="#f00" stroke-width="2"/>
                <path d="M857 407h5M857 406h5M820 397h6M820 404h6" stroke-width="4"/>
                <path d="M814 395h3M816 394v3M814 403h3M816 402v3M772 395h9v5h-9zM772 395l9 5M781 395l-9 5M782 390h2v4h-2z"/>
                <use href="#filler" x="840" y="420"/><use href="#filler" x="840" y="447"/><use href="#can" x="863" y="420"/><use href="#can" x="865" y="447"/>
                <use href="#mixer" x="741" y="478"/><use href="#mixer" x="755" y="478"/>
                <path d="M768 475l3 5h-6z" stroke="#f0f"/>
                <use href="#mixer" x="837" y="504"/><use href="#mixer" x="850" y="504"/><use href="#mixer" x="862" y="504"/><use href="#mixer" x="873" y="504"/>
                <circle cx="817" cy="514" r="3"/><circle cx="876" cy="514" r="3"/>
                <path d="M817 515v11" stroke="#6666b3"/>
                <path d="M838 516h2M852 516h2M863 516h2" stroke-width="2"/>
                <path d="M814 499v6" stroke="#f00" stroke-width="3"/>
                <path d="M895 499v20" stroke="#f00" stroke-width="3" stroke-dasharray="3 2"/>

                <!-- conveyors -->
                <path d="M907 427h47M907 438h47" stroke-width="2"/>
                <path d="M905 425h5v4h-5zM905 436h5v4h-5zM905 449h18v11h-18zM905 451h18M914 449v11M923 453h34v3h-34zM905 470h28v14h-28zM905 473h28M905 477h28M933 476h22v4h-22z"/>
                <path d="M923 455h32M933 478h20"/>

                <!-- title block -->
                <path d="M1225 683h-181v51M1123 683v51M1141 683v21M1203 683v50M1123 694h102M1044 704h181M1062 704v30M1083 704v30M1102 704v30M1043 714h80M1043 724h80M1184 704v29M1184 711h41M1184 719h41M1184 726h41M1143 687h36v5h-36z"/>
            </svg>
        </div>

        <!-- Sheet tabs -->
        <div class="h-[17px] shrink-0 flex items-start border-t border-[#999999] leading-[13px]">
            <svg class="w-[65px] h-4" viewBox="0 0 65 16"><path d="M3.500 5v7M58.500 5v7" stroke="#555" /><path d="M9 5v7L5 8.500zM24 5v7l-4-3.500zM37 5v7l4-3.500zM52 5v7l4-3.500z" fill="#555"/></svg>
            <button class="relative w-[48px] h-4">
                <svg class="absolute inset-0 w-12 h-4" viewBox="0 0 48 16"><path d="M0 0l8 15.500h32L48 0z" fill="#fff"/><path d="M0 0l8 15.500h32L48 0" fill="none" stroke="#888"/></svg>
                <span class="relative text-[14px] font-bold">模型</span>
            </button>
            <button class="relative w-12 h-4">
                <svg class="absolute inset-0 w-12 h-4" viewBox="0 0 48 16"><path d="M-3 8l4 7.500h39L48 0" fill="none" stroke="#888"/></svg>
                <span class="relative mr-2">布局1</span>
            </button>
            <button class="relative w-12 h-4">
                <svg class="absolute inset-0 w-12 h-4" viewBox="0 0 48 16"><path d="M-3 8l4 7.500h39L48 0" fill="none" stroke="#888"/></svg>
                <span class="relative mr-2">布局2</span>
            </button>
        </div>
    </section>
</main>

<!-- Command line dock -->
<footer class="shrink-0 h-[15px] ml-[25px] overflow-hidden border-t-[6px] border-[#cccccc]">
    <p class="pl-1 pt-[3px]">命令行</p>
</footer>

<p class="absolute right-[14px] bottom-2 text-[18px] leading-6 text-[#999999] font-['Liberation_Sans',sans-serif] [text-shadow:1px_1px_0_#ffffff]">CSDN @biyezuopinvip</p>
</body>
</html>
